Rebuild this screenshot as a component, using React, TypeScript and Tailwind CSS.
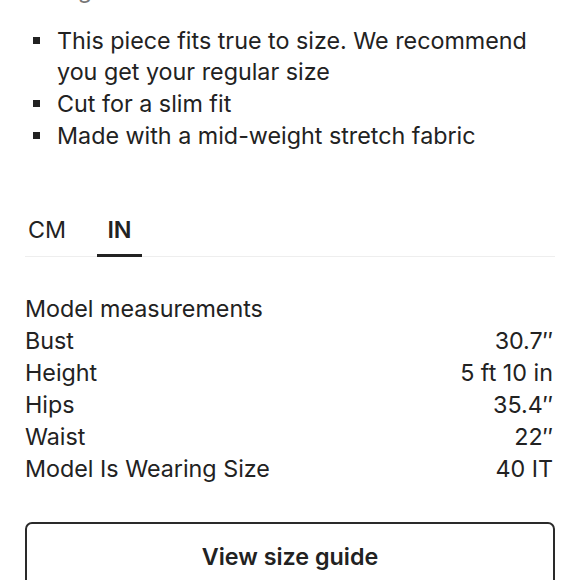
export default function App() {
  const rows: [string, string][] = [
    ["Bust", "30.7″"],
    ["Height", "5 ft 10 in"],
    ["Hips", "35.4″"],
    ["Waist", "22″"],
    ["Model Is Wearing Size", "40 IT"],
  ];
  const bullets = [
    "This piece fits true to size. We recommend you get your regular size",
    "Cut for a slim fit",
    "Made with a mid-weight stretch fabric",
  ];
  return (
    <div
      className="w-[580px] h-[580px] overflow-hidden bg-white text-[#222222]"
      style={{ fontFamily: "Inter, 'Noto Sans', sans-serif" }}
    >
      <div className="px-[25px]">
        <div className="mt-[-26px] text-[23.3px] leading-[31.5px] text-[#777777]">Sizing</div>
        <ul className="mt-[19px] flex flex-col">
          {bullets.map((b) => (
            <li key={b} className="flex text-[23.3px] leading-[31.8px]">
              <span className="w-[32px] shrink-0 flex justify-start pl-[8px] pt-[12px]">
                <span className="block w-[7px] h-[7px] bg-[#222222]" />
              </span>
              <span className="pr-[20px]">{b}</span>
            </li>
          ))}
        </ul>
        <div className="mt-[64px] flex border-b border-[#eeeeee]">
          <div className="w-[72px] pl-[3px] pb-[12px] text-[23.3px] leading-[28px]">CM</div>
          <div className="w-[45px] text-center pb-[10px] text-[23.3px] leading-[28px] font-semibold border-b-[3px] border-[#222222] mb-[-1px]">
            IN
          </div>
        </div>
        <div className="mt-[36px] flex flex-col text-[23.3px] leading-[32px]">
          <div>Model measurements</div>
          {rows.map(([k, v]) => (
            <div key={k} className="flex justify-between pr-[2px]">
              <span>{k}</span>
              <span>{v}</span>
            </div>
          ))}
        </div>
        <button className="mt-[37px] w-[530px] h-[70px] border-2 border-[#2a2a2a] rounded-[7px] flex items-start justify-center pt-[16px] text-[23.3px] font-semibold text-[#222222]">
          View size guide
        </button>
      </div>
    </div>
  );
}
